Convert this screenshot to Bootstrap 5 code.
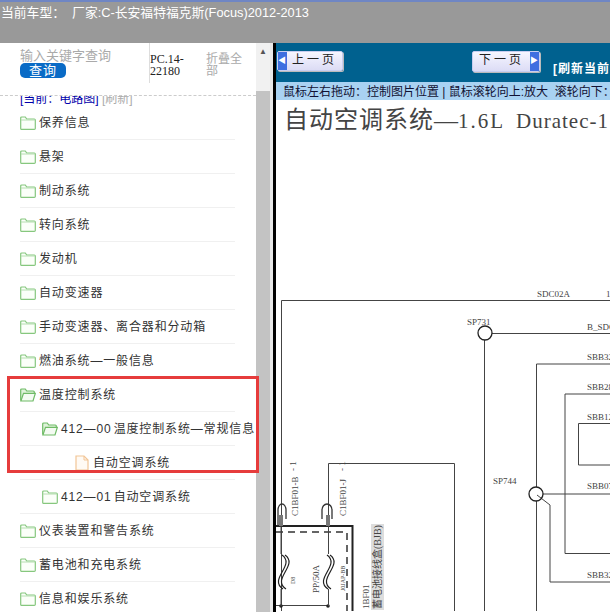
<!doctype html>
<html lang="zh">
  <head>
    <meta charset="utf-8">
    <meta name="viewport" content="width=device-width, initial-scale=1">
    <title>电路图</title>
    <link href="https://cdn.jsdelivr.net/npm/bootstrap@5.3.0/dist/css/bootstrap.min.css" rel="stylesheet">
    <style>
      html, body { height: 612px; overflow: hidden; }
      body { font-family: "Liberation Sans", "Noto Sans CJK SC", sans-serif; font-size: 12px; color: #333; background: #fff; }

      .top-bar { height: 43px; background: #999; border-top: 2px solid #6f86c4; color: #fff; font-size: 12.8px; line-height: 17px; padding: 2px 0 0 1px; white-space: nowrap; }
      .main-area { height: 569px; }

      .side-pane { width: 256px; position: relative; z-index: 2; }
      .search-box { height: 53px; border-bottom: 1px dashed #ccc; padding-left: 20px; }
      .search-left { width: 129px; padding-top: 5px; }
      .search-hint { color: #aaa; font-size: 13px; line-height: 15px; }
      .search-btn { width: 46px; height: 15px; padding: 0; border: 0; border-radius: 5px; background: #0a6bc6; color: #fff; font-size: 13px; line-height: 14px; letter-spacing: 1px; display: block; }
      .pc-code { width: 57px; border-left: 1px solid #ddd; height: 40px; padding-top: 10px; font-family: "Liberation Serif", serif; font-size: 12px; line-height: 12px; color: #222; }
      .fold-all { width: 40px; padding-top: 10px; color: #aaa; font-size: 12px; line-height: 12px; }
      .current-line { height: 10px; line-height: 6px; overflow: hidden; padding-left: 20px; color: #00a; font-size: 12px; white-space: nowrap; }
      .current-line span { color: #aaa; }

      .tree-row { height: 34px; width: 215px; margin-left: 20px; border-bottom: 1px solid #f0f0f0; font-size: 12px; letter-spacing: .85px; word-spacing: -2px; white-space: nowrap; color: #333; }
      .tree-row svg { flex: none; margin-right: 3px; }
      .tree-row.lvl-2 { padding-left: 22px; }
      .tree-row.lvl-3 { padding-left: 55px; }
      .tree-row.lvl-3 svg { margin-right: 4px; }
      .mark-wrap { position: relative; }
      .red-mark { position: absolute; left: 7px; top: -2px; width: 252px; height: 97px; border: 3px solid #e63c3c; pointer-events: none; }

      .scroll-bar { width: 14px; background: #f1f1f1; }
      .scroll-up { height: 48px; color: #555; font-size: 8px; line-height: 18px; text-align: center; }
      .scroll-thumb { background: #c3c3c3; }
      .pane-gap { width: 3px; background: #e8e8e8; }
      .pane-line { width: 3px; background: #000; }

      .draw-pane { width: 334px; }
      .page-bar { height: 39px; background: #00618f; padding-left: 1px; }
      .page-btn { height: 20px; width: 66px; padding: 0; border: 1px solid #c8cdf0; border-radius: 2px; background: linear-gradient(#f6f6ff, #dcdcf5); color: #222; font-size: 12px; letter-spacing: 3px; line-height: 17px; white-space: nowrap; box-shadow: 1px 1px 0 #bbb; }
      .page-btn i { display: block; width: 9px; background: #3f6fe0; color: #fff; font-style: normal; font-size: 8px; letter-spacing: 0; line-height: 18px; flex: none; }
      .next-btn { width: 68px; height: 21px; margin: 8px 13px 0 129px; }
      .refresh-link { color: #fff; font-weight: 700; font-size: 12px; letter-spacing: 1px; white-space: nowrap; margin-top: 17px; }
      .hint-bar { height: 18px; background: #a9d2f2; color: #113; font-size: 12px; line-height: 20px; padding-left: 7px; white-space: nowrap; overflow: hidden; }
      .drawing { display: block; }
      .drawing text { font-family: "Liberation Serif", "Noto Sans CJK SC", serif; fill: #444; font-size: 9px; }
      .drawing .sheet-title { font-size: 24px; letter-spacing: 0; fill: #444; }
      .drawing .sheet-latin { font-size: 21px; }
      .drawing .wire { fill: none; stroke: #444; stroke-width: 1; }
      .drawing .heavy { fill: none; stroke: #222; stroke-width: 2; }
      .drawing .box-name { font-size: 10px; }
      .drawing .tiny-note { font-size: 6px; }
    </style>
  </head>

  <body>
    <svg width="0" height="0" class="d-block">
      <symbol id="folderShut" viewBox="0 0 16 14">
        <path d="M.7 12.6V2q0-1 1-1h3.6l1.4 2h7.6q1 0 1 1v8.6q0 .8-1 .8H1.7q-1 0-1-.8z" fill="#fbfff9" stroke="#86c77e" stroke-width="1.2"/>
        <path d="M1 4h14" stroke="#b5deb0"/>
      </symbol>
      <symbol id="folderOpen" viewBox="0 0 16 14">
        <path d="M.7 12.6V2q0-1 1-1h3.6l1.4 2h6.6q1 0 1 1v1" fill="#dff2da" stroke="#6fbb66" stroke-width="1.2"/>
        <path d="M.9 13l2.6-7.6h11.8L13 13z" fill="#f4fbf2" stroke="#6fbb66" stroke-width="1.2"/>
      </symbol>
      <symbol id="pageIcon" viewBox="0 0 14 16">
        <path d="M1 1h8l4 4v10H1z" fill="#fffaf4" stroke="#f2c596" stroke-width="1.2"/>
        <path d="M9 1v4h4" fill="none" stroke="#f2c596"/>
      </symbol>
    </svg>

    <div class="top-bar">当前车型：&nbsp; 厂家:C-长安福特福克斯(Focus)2012-2013</div>

    <div class="main-area d-flex">
      <div class="side-pane flex-shrink-0">
        <div class="search-box d-flex">
          <div class="search-left">
            <div class="search-hint">输入关键字查询</div>
            <button class="btn search-btn">查询</button>
          </div>
          <div class="pc-code">PC.14-<br>22180</div>
          <div class="fold-all">折叠全部</div>
        </div>
        <div class="current-line">[当前：电路图] <span>[刷新]</span></div>
        <ul class="list-unstyled m-0">
          <li class="tree-row d-flex align-items-center"><svg width="16" height="14"><use href="#folderShut"/></svg>保养信息</li>
          <li class="tree-row d-flex align-items-center"><svg width="16" height="14"><use href="#folderShut"/></svg>悬架</li>
          <li class="tree-row d-flex align-items-center"><svg width="16" height="14"><use href="#folderShut"/></svg>制动系统</li>
          <li class="tree-row d-flex align-items-center"><svg width="16" height="14"><use href="#folderShut"/></svg>转向系统</li>
          <li class="tree-row d-flex align-items-center"><svg width="16" height="14"><use href="#folderShut"/></svg>发动机</li>
          <li class="tree-row d-flex align-items-center"><svg width="16" height="14"><use href="#folderShut"/></svg>自动变速器</li>
          <li class="tree-row d-flex align-items-center"><svg width="16" height="14"><use href="#folderShut"/></svg>手动变速器、离合器和分动箱</li>
          <li class="tree-row d-flex align-items-center"><svg width="16" height="14"><use href="#folderShut"/></svg>燃油系统—一般信息</li>
          <li class="mark-wrap">
            <div class="tree-row d-flex align-items-center"><svg width="16" height="14"><use href="#folderOpen"/></svg>温度控制系统</div>
            <div class="tree-row lvl-2 d-flex align-items-center"><svg width="16" height="14"><use href="#folderOpen"/></svg>412—00 温度控制系统—常规信息</div>
            <div class="tree-row lvl-3 d-flex align-items-center"><svg width="14" height="16"><use href="#pageIcon"/></svg>自动空调系统</div>
            <div class="red-mark"></div>
          </li>
          <li class="tree-row lvl-2 d-flex align-items-center"><svg width="16" height="14"><use href="#folderShut"/></svg>412—01 自动空调系统</li>
          <li class="tree-row d-flex align-items-center"><svg width="16" height="14"><use href="#folderShut"/></svg>仪表装置和警告系统</li>
          <li class="tree-row d-flex align-items-center"><svg width="16" height="14"><use href="#folderShut"/></svg>蓄电池和充电系统</li>
          <li class="tree-row d-flex align-items-center"><svg width="16" height="14"><use href="#folderShut"/></svg>信息和娱乐系统</li>
        </ul>
      </div>

      <div class="scroll-bar flex-shrink-0 d-flex flex-column">
        <div class="scroll-up">▲</div>
        <div class="scroll-thumb flex-grow-1"></div>
      </div>
      <div class="pane-gap flex-shrink-0"></div>
      <div class="pane-line flex-shrink-0"></div>

      <div class="draw-pane flex-shrink-0 overflow-hidden">
        <div class="page-bar d-flex align-items-start">
          <button class="btn page-btn d-flex flex-shrink-0 mt-2 text-start"><i>◀</i><span class="flex-grow-1 text-center">上一页</span></button>
          <button class="btn page-btn d-flex flex-shrink-0 text-start next-btn"><span class="flex-grow-1 text-center">下一页</span><i>▶</i></button>
          <span class="refresh-link flex-shrink-0">[刷新当前页面]</span>
        </div>
        <div class="hint-bar">鼠标左右拖动：控制图片位置 | 鼠标滚轮向上:放大&nbsp; 滚轮向下：缩小</div>
        <svg class="drawing" width="334" height="511" viewBox="276 101 334 511">
          <text class="sheet-title" x="284" y="129" textLength="174">自动空调系统—</text>
          <text class="sheet-latin" x="458" y="129" letter-spacing="2">1.6L</text>
          <text class="sheet-latin" x="516" y="129" letter-spacing="1">Duratec-1</text>

          <text x="537" y="298">SDC02A</text>
          <text x="606" y="298">1</text>
          <text x="467" y="326">SP731</text>
          <text x="493" y="485">SP744</text>
          <text x="587" y="331">B_SDC</text>
          <text x="587" y="361">SBB32</text>
          <text x="587" y="391">SBB28</text>
          <text x="587" y="421">SBB12</text>
          <text x="587" y="490">SBB07</text>
          <text x="587" y="579">SBB32</text>

          <path class="wire" d="M610 301.5H281.5V612"/>
          <path class="wire" d="M492 334.5H610M484.5 341V612"/>
          <path class="wire" d="M610 365H536.5V488M536.5 502V612"/>
          <path class="wire" d="M610 395H565V554.5H610"/>
          <path class="wire" d="M610 424.500H578.500V466H610"/>
          <path class="wire" d="M543 495H610"/>
          <path class="wire" d="M537 496L550 506V583H610"/>
          <path class="wire" d="M328.500 520V464.500H454.500V612"/>
          <circle cx="485" cy="334" r="7" fill="none" stroke="#222" stroke-width="1.300"/>
          <circle cx="536" cy="495" r="7" fill="none" stroke="#222" stroke-width="1.300"/>

          <path class="heavy" d="M276 527H352.500V612"/>
          <path d="M276 533H347V612" fill="none" stroke="#333" stroke-width="1.500" stroke-dasharray="7 5"/>
          <path class="wire" d="M276 606.500H329"/>
          <circle cx="281" cy="607" r="1.800" fill="#222"/>
          <circle cx="328" cy="607" r="1.800" fill="#222"/>
          <path d="M278 527V511a4 6 0 0 1 8 0V520M322 520V511a5 6 0 0 1 10 0V520" fill="none" stroke="#333" stroke-width="1.300"/>
          <rect x="279" y="516" width="4" height="11" fill="#777"/>
          <rect x="326" y="516" width="4" height="11" fill="#777"/>
          <path d="M281 527V555M328.500 527V555M281 590V607M328.500 590V607" fill="none" stroke="#444"/>
          <path d="M282 556C296 566 268 580 283 590M285 556C299 566 271 580 286 590M327 556C341 566 313 580 328 590M330 556C344 566 316 580 331 590" fill="none" stroke="#222" stroke-width="1.200"/>

          <rect x="371" y="525" width="13" height="86" fill="#ddd"/>
          <text transform="translate(296 472) rotate(-90)">- 1</text>
          <text transform="translate(345 472) rotate(-90)">- 1</text>
          <text transform="translate(298 517) rotate(-90)">C1BF01-B</text>
          <text transform="translate(346 517) rotate(-90)">C1BF01-J</text>
          <text class="tiny-note" transform="translate(295 585) rotate(-90)">D8</text>
          <text transform="translate(319 594) rotate(-90)">PP/50A</text>
          <text class="tiny-note" transform="translate(345 592) rotate(-90)">J0JAP-BB</text>
          <text transform="translate(369 610) rotate(-90)">1BF01</text>
          <text class="box-name" transform="translate(381 610) rotate(-90)">蓄电池接线盒(BJB)</text>
        </svg>
      </div>
    </div>

    <script src="https://cdn.jsdelivr.net/npm/bootstrap@5.3.0/dist/js/bootstrap.bundle.min.js"></script>
  </body>
</html>
